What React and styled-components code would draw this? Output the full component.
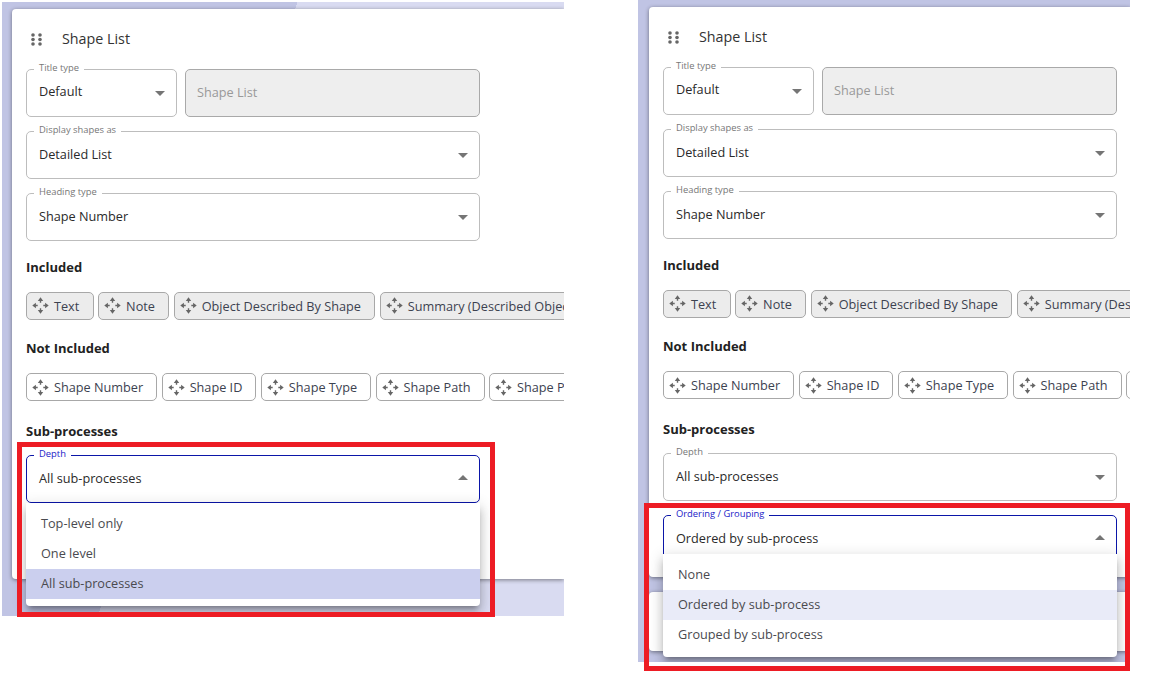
import React from 'react';
import styled, { createGlobalStyle } from 'styled-components';

const GlobalStyle = createGlobalStyle`
    html, body {
        margin: 0;
        padding: 0;
        background: #fff;
        font-family: "Open Sans", "Liberation Sans", sans-serif;
    }
`;

const Page = styled.div`
    display: flex;
    align-items: flex-start;
    width: 1174px;
    height: 678px;
    overflow: hidden;
`;

const Shot = styled.div`
    position: relative;
    flex: none;
    width: ${p => p.$width}px;
    margin-left: ${p => p.$left}px;
    margin-top: ${p => p.$top}px;
`;

const Panel = styled.div`
    display: flex;
    flex-direction: column;
    gap: 15px;
    height: ${p => p.$height}px;
    padding: 7px 0 0 ${p => p.$inset}px;
    box-sizing: border-box;
    overflow: hidden;
    background: ${p => p.$background};
`;

const Card = styled.div`
    flex: none;
    height: ${p => p.$height}px;
    padding: 18px 0 0 14px;
    box-sizing: border-box;
    background: #fff;
    border-radius: 4px 0 0 4px;
    box-shadow: 0 1px 4px rgba(0, 0, 0, 0.45);
`;

const TitleRow = styled.div`
    display: flex;
    align-items: center;
    height: 24px;
    padding-left: 5px;
    margin-bottom: 18px;
    font-size: 14.3px;
    color: #333;
`;

const TitleText = styled.span`
    margin-left: 20px;
    padding-bottom: 2px;
`;

const Fields = styled.div`
    display: flex;
    flex-direction: column;
    gap: 14px;
    width: 454px;
`;

const FieldRow = styled.div`
    display: flex;
    gap: 8px;
`;

const Field = styled.div`
    position: relative;
    flex: ${p => (p.$width ? `0 0 ${p.$width}px` : p.$disabled ? 1 : 'none')};
    display: flex;
    align-items: center;
    justify-content: space-between;
    height: 48px;
    padding: 0 11px 3px ${p => (p.$disabled ? 11 : 12)}px;
    box-sizing: border-box;
    font-size: 12.7px;
    color: ${p => (p.$disabled ? '#999' : '#2a2a2a')};
    background: ${p => (p.$disabled ? '#eeeeee' : '#fff')};
    border: 1px solid ${p => (p.$focused ? '#0b16a8' : p.$disabled ? '#a9a9a9' : '#bdbdbd')};
    border-radius: 5px;
`;

const FieldValue = styled.span`
    padding-bottom: ${p => (p.$raised ? 2 : 0)}px;
`;

const FieldLabel = styled.label`
    position: absolute;
    top: -9px;
    left: 7px;
    padding: 0 5px;
    font-size: 9.4px;
    line-height: 14px;
    color: ${p => (p.$focused ? '#2323c8' : '#777')};
    background: #fff;
`;

const Caret = styled.span`
    width: 0;
    height: 0;
    margin-top: ${p => (p.$open ? 0 : 4)}px;
    border-left: 5px solid transparent;
    border-right: 5px solid transparent;
    border-top: ${p => (p.$open ? 0 : '5px solid #757575')};
    border-bottom: ${p => (p.$open ? '5px solid #757575' : 0)};
`;

const Menu = styled.div`
    position: absolute;
    z-index: 2;
    top: ${p => p.$top}px;
    left: -1px;
    right: -1px;
    padding: 6px 0 7px;
    background: #fff;
    border-radius: 0 0 4px 4px;
    box-shadow: 0 5px 5px -3px rgba(0, 0, 0, 0.3), 0 8px 10px 1px rgba(0, 0, 0, 0.14), 0 3px 14px 2px rgba(0, 0, 0, 0.12);
`;

const MenuItem = styled.div`
    display: flex;
    align-items: center;
    height: 30px;
    padding: 0 0 2px 15px;
    box-sizing: border-box;
    font-size: 12.7px;
    color: #4a4a4f;
    background: ${p => p.$background || 'transparent'};
`;

const SectionTitle = styled.div`
    height: 20px;
    margin: ${p => p.$top}px 0 ${p => p.$bottom}px;
    font-size: 13px;
    font-weight: 700;
    line-height: 20px;
    color: #222;
`;

const ChipRow = styled.div`
    display: flex;
    gap: 4.5px;
`;

const Chip = styled.div`
    flex: none;
    display: flex;
    align-items: center;
    gap: 5px;
    height: 28px;
    padding: 0 ${p => (p.$included ? 13.3 : 13)}px ${p => (p.$included ? 1 : 0)}px 5px;
    box-sizing: border-box;
    font-size: 12.7px;
    color: #3c4250;
    white-space: nowrap;
    background: ${p => (p.$included ? '#ececec' : '#fff')};
    border: 1px solid #a8a8a8;
    border-radius: 5px;
`;

const MoveGlyph = styled.svg`
    flex: none;
    fill: #666;
`;

const Highlight = styled.div`
    position: absolute;
    z-index: 3;
    left: ${p => p.$left}px;
    top: ${p => p.$top}px;
    width: ${p => p.$width}px;
    height: ${p => p.$height}px;
    box-sizing: border-box;
    border: 5px solid #ed1c24;
    pointer-events: none;
`;

const DragIcon = () => (
    <svg width="11" height="13" viewBox="0 0 11 13" fill="#666">
        <circle cx="2" cy="2" r="1.8" />
        <circle cx="9" cy="2" r="1.8" />
        <circle cx="2" cy="6.5" r="1.8" />
        <circle cx="9" cy="6.5" r="1.8" />
        <circle cx="2" cy="11" r="1.8" />
        <circle cx="9" cy="11" r="1.8" />
    </svg>
);

const MoveIcon = () => (
    <MoveGlyph width="17" height="17" viewBox="0 0 17 17">
        <path d="M8.5 0.3 11.2 3.9H9.2V5.7H7.8V3.9H5.8Z" />
        <path d="M8.5 16.7 11.2 13.1H9.2V11.3H7.8V13.1H5.8Z" />
        <path d="M0.3 8.5 3.9 5.8V7.8H5.7V9.2H3.9V11.2Z" />
        <path d="M16.7 8.5 13.1 5.8V7.8H11.3V9.2H13.1V11.2Z" />
    </MoveGlyph>
);

const included = ['Text', 'Note', 'Object Described By Shape', 'Summary (Described Object)'];
const notIncluded = ['Shape Number', 'Shape ID', 'Shape Type', 'Shape Path', 'Shape Parent'];

const Select = ({ label, value, width, focused, open, children }) => (
    <Field $width={width} $focused={focused}>
        <FieldLabel $focused={focused}>{label}</FieldLabel>
        <FieldValue $raised={!!width}>{value}</FieldValue>
        <Caret $open={open} />
        {children}
    </Field>
);

const ShapeCard = ({ height, children }) => (
    <Card $height={height}>
        <TitleRow>
            <DragIcon />
            <TitleText>Shape List</TitleText>
        </TitleRow>
        <Fields>
            <FieldRow>
                <Select label="Title type" value="Default" width={151} />
                <Field $disabled>Shape List</Field>
            </FieldRow>
            <Select label="Display shapes as" value="Detailed List" />
            <Select label="Heading type" value="Shape Number" />
        </Fields>
        <SectionTitle $top={16} $bottom={15}>Included</SectionTitle>
        <ChipRow>
            {included.map(name => <Chip key={name} $included><MoveIcon />{name}</Chip>)}
        </ChipRow>
        <SectionTitle $top={18} $bottom={15}>Not Included</SectionTitle>
        <ChipRow>
            {notIncluded.map(name => <Chip key={name}><MoveIcon />{name}</Chip>)}
        </ChipRow>
        <SectionTitle $top={20} $bottom={14}>Sub-processes</SectionTitle>
        <Fields>{children}</Fields>
    </Card>
);

export default function App() {
    return (
        <Page>
            <GlobalStyle />
            <Shot $width={562} $left={2} $top={2}>
                <Panel $height={614} $inset={10} $background="linear-gradient(108deg, #c0c4e4 281px, #d9dbf1 281px)">
                    <ShapeCard height={570}>
                        <Select label="Depth" value="All sub-processes" focused open>
                            <Menu $top={47}>
                                <MenuItem>Top-level only</MenuItem>
                                <MenuItem>One level</MenuItem>
                                <MenuItem $background="#cbcfee">All sub-processes</MenuItem>
                            </Menu>
                        </Select>
                    </ShapeCard>
                </Panel>
                <Highlight $left={15} $top={440} $width={478} $height={175} />
            </Shot>
            <Shot $width={492} $left={74} $top={0}>
                <Panel $height={662} $inset={11} $background="#c0c4e4">
                    <ShapeCard height={570}>
                        <Select label="Depth" value="All sub-processes" />
                        <Select label="Ordering / Grouping" value="Ordered by sub-process" focused open>
                            <Menu $top={38}>
                                <MenuItem>None</MenuItem>
                                <MenuItem $background="#e9ebf8">Ordered by sub-process</MenuItem>
                                <MenuItem>Grouped by sub-process</MenuItem>
                            </Menu>
                        </Select>
                    </ShapeCard>
                    <Card $height={59} />
                </Panel>
                <Highlight $left={6} $top={503} $width={486} $height={168} />
            </Shot>
        </Page>
    );
}
